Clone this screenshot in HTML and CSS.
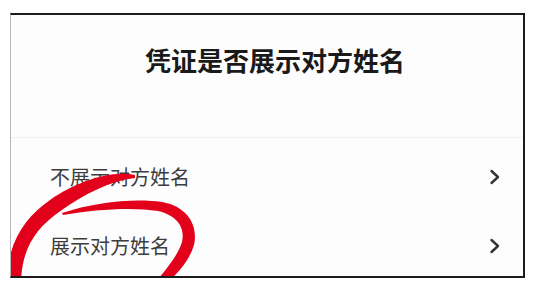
FILE: index.html
```html
<!DOCTYPE html>
<html lang="zh">
<head>
<meta charset="utf-8">
<link rel="stylesheet" href="styles.css">
</head>
<body>
<div class="frame">
  <div class="header">
    <div class="title">凭证是否展示对方姓名</div>
  </div>
  <div class="row">
    <span class="label">不展示对方姓名</span>
    <svg class="chev" width="12" height="16" viewBox="0 0 12 16"><polyline points="2.5,2 9,8 2.5,14" fill="none" stroke="#333" stroke-width="2.4" stroke-linecap="round" stroke-linejoin="round"/></svg>
  </div>
  <div class="row">
    <span class="label">展示对方姓名</span>
    <svg class="chev" width="12" height="16" viewBox="0 0 12 16"><polyline points="2.5,2 9,8 2.5,14" fill="none" stroke="#333" stroke-width="2.4" stroke-linecap="round" stroke-linejoin="round"/></svg>
  </div>
  <svg class="mark" width="533" height="288" viewBox="0 0 533 288">
    <path fill="#e3001b" d="M135,175 C110,170 76,182 50,200 C24,218 6,245 7,285 L21,285 C21,250 35,229 59,212 C84,194 110,181 135,178 Z"/>
    <path fill="#e3001b" d="M62,213 C95,202 135,198 162,202 C190,207 198,228 194,245 C190,259 180,271 167,283 L155,283 C168,267 178,255 182,242 C185,229 179,216 158,211 C134,207 96,209 63,215 Z"/>
  </svg>
</div>
</body>
</html>
```
FILE: styles.css
```css
html, body {
  margin: 0;
  padding: 0;
  background: #ffffff;
}
body {
  width: 533px;
  height: 288px;
  overflow: hidden;
  font-family: "Noto Sans CJK SC", "Noto Sans", sans-serif;
}
.frame {
  position: relative;
  margin: 13px 0 0 10px;
  width: 512px;
  height: 261px;
  border-top: 2px solid #1c1c1c;
  border-right: 2px solid #1c1c1c;
  border-bottom: 2px solid #1c1c1c;
  border-left: 1px solid #b5b5b5;
  background: #fdfdfd;
  overflow: hidden;
  display: flex;
  flex-direction: column;
}
.header {
  height: 127px;
  box-sizing: border-box;
  padding: 29px 0 0 16px;
  border-bottom: 1px solid #f1f1f1;
  display: flex;
  justify-content: center;
}
.title {
  font-size: 26px;
  line-height: 32px;
  font-weight: 700;
  color: #1a1a1a;
}
.row {
  height: 71px;
  box-sizing: border-box;
  padding: 23px 22px 0 39px;
  display: flex;
  align-items: flex-start;
  justify-content: space-between;
}
.label {
  font-size: 20px;
  line-height: 32px;
  color: #3d3d3d;
}
.chev {
  margin-top: 8px;
}
.mark {
  position: absolute;
  left: -11px;
  top: -15px;
}
```
